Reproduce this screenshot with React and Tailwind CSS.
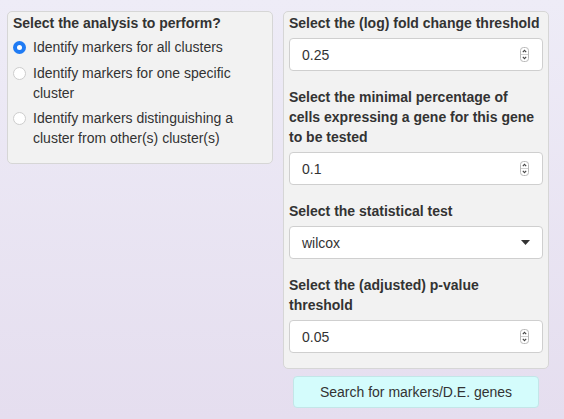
import React from "react";

const Spinner = () => (
  <svg width="9" height="15" viewBox="0 0 9 15" className="shrink-0">
    <rect x="0.5" y="0.5" width="8" height="14" rx="3" fill="#fff" stroke="#b9b9b9" />
    <line x1="1" y1="7.5" x2="8" y2="7.5" stroke="#d0d0d0" strokeWidth="1" />
    <path d="M2.8 5.2 L4.5 3.4 L6.2 5.2" fill="none" stroke="#444" strokeWidth="1.1" />
    <path d="M2.8 9.8 L4.5 11.6 L6.2 9.8" fill="none" stroke="#444" strokeWidth="1.1" />
  </svg>
);

const NumberInput = ({ value }) => (
  <div className="flex h-[33px] items-center justify-between rounded-[4px] border border-[#cfcfcf] bg-white pl-[12px] pr-[13px]">
    <span>{value}</span>
    <Spinner />
  </div>
);

const Radio = ({ checked, children, className }) => (
  <label className={`flex items-start gap-[7px] ${className || ""}`}>
    <span className="mt-[3px] flex h-[14px] w-[13px] shrink-0 items-center justify-center">
      {checked ? (
        <span className="flex h-[13px] w-[13px] items-center justify-center rounded-full bg-[#1f7bf4]">
          <span className="h-[5px] w-[5px] rounded-full bg-white" />
        </span>
      ) : (
        <span className="h-[13px] w-[13px] rounded-full border border-[#cdcdcd] bg-white" />
      )}
    </span>
    <span>{children}</span>
  </label>
);

export default function App() {
  return (
    <div className="h-[419px] w-full bg-gradient-to-b from-[#eeecf7] to-[#e5deef] font-['Liberation_Sans',Arial,sans-serif] text-[14px] leading-[20px] text-[#333]">
      <div className="flex items-start gap-[10px] pl-[7px] pt-[11px]">
        {/* analysis choice */}
        <div className="w-[266px] rounded-[5px] border border-[#d6d6d6] bg-[#f2f2f2] px-[5px] pb-[15px] pt-px">
          <div className="mb-[4px] font-bold">Select the analysis to perform?</div>
          <Radio checked>Identify markers for all clusters</Radio>
          <Radio className="mt-[6px]">Identify markers for one specific cluster</Radio>
          <Radio className="mt-[5px]">Identify markers distinguishing a cluster from other(s) cluster(s)</Radio>
        </div>

        {/* parameters */}
        <div className="flex w-[266px] flex-col items-center">
          <div className="w-full rounded-[5px] border border-[#d6d6d6] bg-[#f2f2f2] px-[5px] pt-px">
            <div className="mb-[16px]">
              <div className="mb-[5px] font-bold">Select the (log) fold change threshold</div>
              <NumberInput value="0.25" />
            </div>
            <div className="mb-[16px]">
              <div className="mb-[5px] font-bold">
                Select the minimal percentage of
                <br />
                cells expressing a gene for this gene
                <br />
                to be tested
              </div>
              <NumberInput value="0.1" />
            </div>
            <div className="mb-[16px]">
              <div className="mb-[5px] font-bold">Select the statistical test</div>
              <div className="flex h-[33px] items-center justify-between rounded-[4px] border border-[#cfcfcf] bg-white pl-[12px] pr-[12px]">
                <span>wilcox</span>
                <svg width="9" height="5" viewBox="0 0 9 5">
                  <path d="M0 0 L9 0 L4.5 5 Z" fill="#333" />
                </svg>
              </div>
            </div>
            <div className="mb-[15px]">
              <div className="mb-[5px] font-bold">Select the (adjusted) p-value threshold</div>
              <NumberInput value="0.05" />
            </div>
          </div>
          <button className="mt-[7px] h-[32px] w-[246px] rounded-[4px] border border-[#c3e6e8] bg-[#d4fcfc] text-[#333]">
            Search for markers/D.E. genes
          </button>
        </div>
      </div>
    </div>
  );
}
